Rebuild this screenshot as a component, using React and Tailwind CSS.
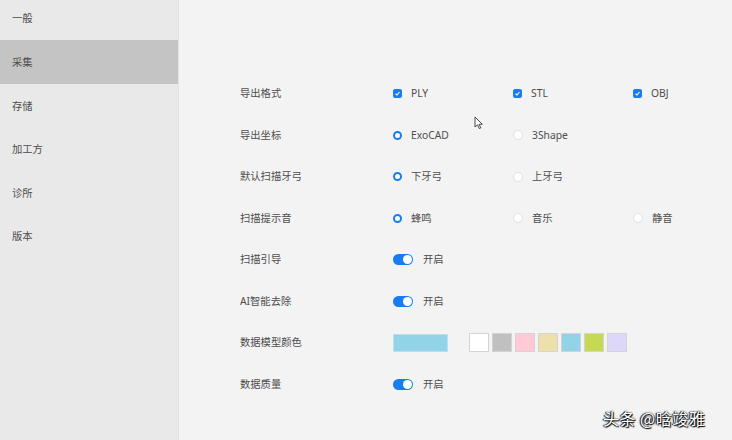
const menu = ["一般", "采集", "存储", "加工方", "诊所", "版本"];

const Checkbox = ({ label }) => (
  <div className="flex items-center gap-[9px] w-[120px]">
    <span className="w-[9px] h-[9px] rounded-[2px] bg-[#1a7cf2] flex items-center justify-center">
      <svg width="7" height="7" viewBox="0 0 7 7">
        <path d="M1.5 3.8 L3 5 L5.5 2" stroke="#fff" strokeWidth="1.1" fill="none" />
      </svg>
    </span>
    <span>{label}</span>
  </div>
);

const Radio = ({ label, on }) => (
  <div className="flex items-center gap-[9px] w-[120px]">
    {on ? (
      <span className="w-[9px] h-[9px] rounded-full border-[2.5px] border-[#1a7cf2] bg-white" />
    ) : (
      <span className="w-[10px] h-[10px] rounded-full border border-[#e2e2e2] bg-white" />
    )}
    <span>{label}</span>
  </div>
);

const Toggle = () => (
  <div className="flex items-center gap-[10px]">
    <span className="w-[20px] h-[11px] rounded-full bg-[#1a7cf2] flex items-center justify-end pr-[1px]">
      <span className="w-[9px] h-[9px] rounded-full bg-white" />
    </span>
    <span>开启</span>
  </div>
);

const swatches = ["#ffffff", "#c0c0c0", "#ffc9d6", "#eee0ab", "#93d3e8", "#c5d955", "#ddd7f9"];

const rows = [
  {
    label: "导出格式",
    content: (
      <>
        <Checkbox label="PLY" />
        <Checkbox label="STL" />
        <Checkbox label="OBJ" />
      </>
    ),
  },
  {
    label: "导出坐标",
    content: (
      <>
        <Radio label="ExoCAD" on />
        <Radio label="3Shape" />
      </>
    ),
  },
  {
    label: "默认扫描牙弓",
    content: (
      <>
        <Radio label="下牙弓" on />
        <Radio label="上牙弓" />
      </>
    ),
  },
  {
    label: "扫描提示音",
    content: (
      <>
        <Radio label="蜂鸣" on />
        <Radio label="音乐" />
        <Radio label="静音" />
      </>
    ),
  },
  { label: "扫描引导", content: <Toggle /> },
  { label: "AI智能去除", content: <Toggle /> },
  {
    label: "数据模型颜色",
    content: (
      <div className="flex items-center">
        <span className="w-[55px] h-[18px] bg-[#93d3e8] border border-[#b8e0ee]" />
        <div className="flex gap-[3px] ml-[21px]">
          {swatches.map((c) => (
            <span
              key={c}
              className="w-[20px] h-[19px] border border-[#d4d4d4]"
              style={{ backgroundColor: c }}
            />
          ))}
        </div>
      </div>
    ),
  },
  { label: "数据质量", content: <Toggle /> },
];

export default function App() {
  return (
    <div
      className="w-[732px] h-[440px] flex bg-[#f3f3f3] text-[10.3px] text-[#4d4d4d] relative overflow-hidden"
      style={{ fontFamily: '"Noto Sans", "Noto Sans CJK SC", sans-serif' }}
    >
      {/* Sidebar */}
      <div className="w-[179px] shrink-0 bg-[#e9e9e9] border-r border-[#e2e2e2] flex flex-col">
        {menu.map((m, i) => (
          <div
            key={m}
            className={`flex items-center pl-[12px] ${
              i === 0 ? "h-[40px] pb-[2px]" : "h-[43.6px] pt-[2px]"
            } ${i === 1 ? "bg-[#c4c4c4]" : ""}`}
          >
            {m}
          </div>
        ))}
      </div>

      {/* Content */}
      <div className="flex-1 pt-[73px] pl-[61px]">
        {rows.map((r) => (
          <div key={r.label} className="flex items-center h-[41.5px]">
            <div className="w-[153px]">{r.label}</div>
            <div className="flex items-center">{r.content}</div>
          </div>
        ))}
      </div>

      {/* Mouse cursor */}
      <svg className="absolute left-[474px] top-[116px]" width="10" height="14" viewBox="0 0 10 14">
        <path d="M1 1 L1 11 L3.5 8.8 L5.3 12.6 L6.8 11.9 L5.1 8.3 L8.3 8.3 Z" fill="#fff" stroke="#333" strokeWidth="0.9" />
      </svg>

      {/* Watermark */}
      <div
        className="absolute left-[603px] top-[406px] text-[16px] text-white tracking-[0.5px]"
        style={{
          fontFamily: '"Noto Sans CJK SC", sans-serif',
          textShadow: "0 0 2px #000, 1px 1px 1px #000, -1px 0 1px #000",
        }}
      >
        头条 @晗竣雅
      </div>
    </div>
  );
}
